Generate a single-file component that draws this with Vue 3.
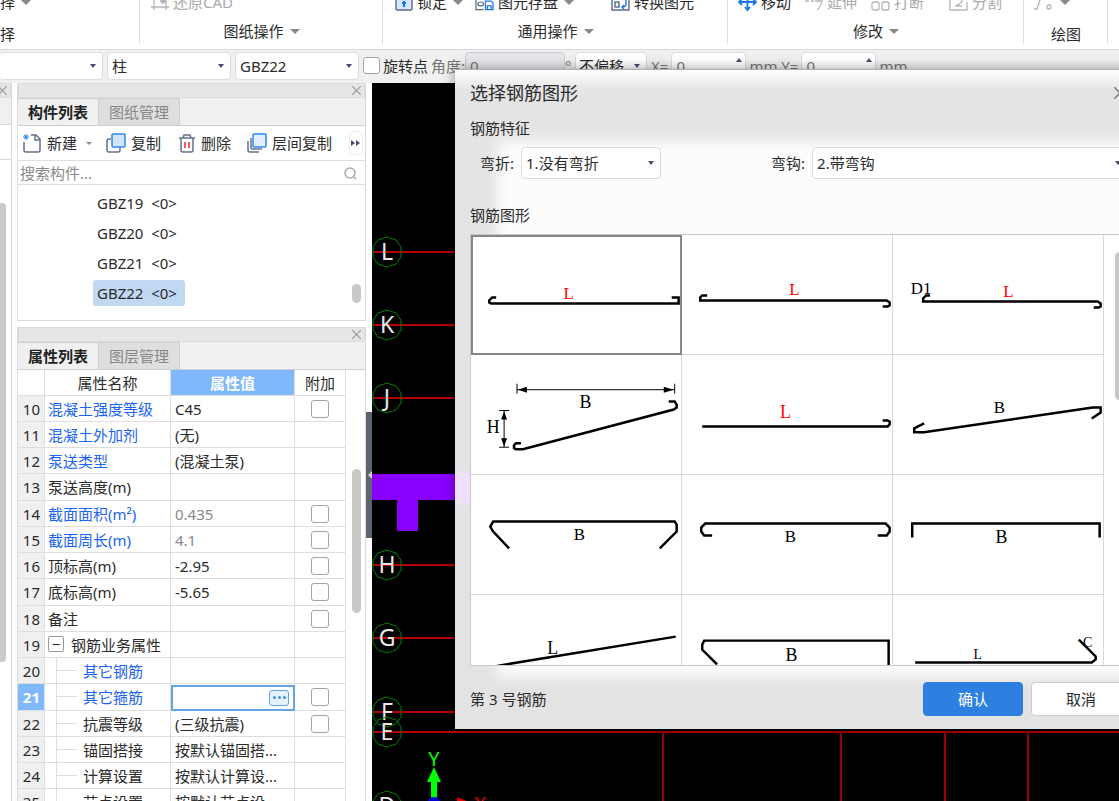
<script setup>
import { ref } from 'vue'

const components = ['GBZ19', 'GBZ20', 'GBZ21', 'GBZ22']
const selectedComponent = ref('GBZ22')

const rows = [
  { n: 10, name: '混凝土强度等级', value: 'C45', link: true, box: true },
  { n: 11, name: '混凝土外加剂', value: '(无)', link: true },
  { n: 12, name: '泵送类型', value: '(混凝土泵)', link: true },
  { n: 13, name: '泵送高度(m)', value: '' },
  { n: 14, name: '截面面积(m²)', value: '0.435', link: true, dim: true, box: true },
  { n: 15, name: '截面周长(m)', value: '4.1', link: true, dim: true, box: true },
  { n: 16, name: '顶标高(m)', value: '-2.95', box: true },
  { n: 17, name: '底标高(m)', value: '-5.65', box: true },
  { n: 18, name: '备注', value: '', box: true },
  { n: 19, name: '钢筋业务属性', value: '', group: true },
  { n: 20, name: '其它钢筋', value: '', link: true, child: true },
  { n: 21, name: '其它箍筋', value: '', link: true, child: true, box: true, active: true },
  { n: 22, name: '抗震等级', value: '(三级抗震)', child: true, box: true },
  { n: 23, name: '锚固搭接', value: '按默认锚固搭...', child: true },
  { n: 24, name: '计算设置', value: '按默认计算设...', child: true },
  { n: 25, name: '节点设置', value: '按默认节点设...', child: true },
]

const shapes = [
  { d: 'M25 63h-4l-3 3v2l2 1h189v-6h-7', texts: [{ t: 'L', x: 98, y: 65, s: 17, red: true }] },
  { d: 'M25 61h-5l-2 2v3h188l3 2v3l-2 1h-5', texts: [{ t: 'L', x: 113, y: 61, s: 17, red: true }] },
  { d: 'M37 61h-4l-3 3v3h176l3 2v3l-2 1h-5', texts: [{ t: 'D1', x: 28, y: 60, s: 17 }, { t: 'L', x: 116, y: 63, s: 17, red: true }] },
  {
    d: 'M50 89h-5l-2 2v3l2 1h7L204 55l3-2v-3l-2-3h-6',
    thin: 'M46 29v10M205 29v10M46 35H205M28 56h10M28 93h10M33 56V93',
    fill: 'M47 35l9-3v6zM204 35l-10-3v6zM33 57l-3 8h6zM33 92l-3-8h6z',
    texts: [{ t: 'B', x: 115, y: 53, s: 18 }, { t: 'H', x: 22, y: 79, s: 18 }],
  },
  { d: 'M20 72H207l2-2v-3l-2-1h-5', texts: [{ t: 'L', x: 104, y: 64, s: 18, red: true }] },
  { d: 'M31 69l-10 5v4h10L201 53h8v5l-9 6', texts: [{ t: 'B', x: 107, y: 58, s: 17 }] },
  { d: 'M38 74L22 57l-3-5 3-5H205l2 3v7l-17 17', texts: [{ t: 'B', x: 109, y: 66, s: 17 }] },
  { d: 'M30 61h-8l-3-4v-4l4-4H205l4 4v4l-3 4h-9', texts: [{ t: 'B', x: 109, y: 68, s: 17 }] },
  { d: 'M19 63V49H208v14', texts: [{ t: 'B', x: 109, y: 69, s: 18 }] },
  { d: 'M20 73L29 71 206 42', texts: [{ t: 'L', x: 82, y: 59, s: 18 }] },
  { d: 'M35 70L20 55v-5l2-4H208V90', texts: [{ t: 'B', x: 110, y: 67, s: 18 }] },
  { d: 'M22 68H200l4-3v-3L187 45', texts: [{ t: 'L', x: 85, y: 65, s: 14 }, { t: 'C', x: 196, y: 52, s: 14 }] },
]
const selectedShape = ref(0)

const axes = [
  { t: 'L', y: 169 }, { t: 'K', y: 242 }, { t: 'J', y: 315 }, { t: 'H', y: 482 },
  { t: 'G', y: 555 }, { t: 'F', y: 629 }, { t: 'E', y: 649 }, { t: 'D', y: 723 },
]
const verticals = [291, 469, 573, 656]
</script>

<template>
  <div class="app">
    <header class="ribbon">
      <section class="group g-select">
        <div class="tools"><button class="tool">择<i class="tri"></i></button></div>
        <div class="caption low">择</div>
      </section>
      <section class="group g-sheet">
        <div class="tools">
          <button class="tool off">
            <svg width="18" height="18" viewBox="0 0 18 18" fill="none" stroke="#b5b5b5" stroke-width="1.3"><path d="M3 1v16M0 14h18M15 1v16M12 5v6M9 8h6M10 6l4 4M14 6l-4 4" /></svg>还原CAD
          </button>
        </div>
        <button class="caption">图纸操作<i class="tri"></i></button>
      </section>
      <section class="group g-common">
        <div class="tools">
          <button class="tool">
            <svg width="18" height="18" viewBox="0 0 18 18" fill="none" stroke="#5b6b85" stroke-width="1.4"><rect x="1" y="3" width="16" height="14" rx="1" fill="#d5e6ff" /><path d="M9 8v6M7 10h4" stroke="#1976ee" stroke-width="2" /></svg>锁定<i class="tri"></i>
          </button>
          <button class="tool">
            <svg width="19" height="18" viewBox="0 0 20 18" fill="none" stroke="#5b6b85" stroke-width="1.3"><path d="M16 5V1H1v16h8" /><ellipse cx="6" cy="11" rx="3" ry="2" /><path d="M11 8h6l2 2v7h-8zM13 17v-4h4v4" stroke="#1976ee" /></svg>图元存盘<i class="tri"></i>
          </button>
          <button class="tool t-convert">
            <svg width="19" height="18" viewBox="0 0 19 18" fill="none" stroke="#5b6b85" stroke-width="1.4"><path d="M1 1v16h17V1M1 4h17" /><rect x="4" y="9" width="4" height="5" /><path d="M15 7v4q0 3-4 3M13 12l-2 2 2 2" stroke="#1976ee" /></svg>转换图元
          </button>
        </div>
        <button class="caption">通用操作<i class="tri"></i></button>
      </section>
      <section class="group g-modify">
        <div class="tools">
          <button class="tool">
            <svg width="19" height="18" viewBox="0 0 19 18" fill="none" stroke="#1976ee" stroke-width="1.8"><path d="M9.500 1v16M1 9h17M7 14l2.500 3 2.500-3M4 6L1 9l3 3M15 6l3 3-3 3" /></svg>移动
          </button>
          <button class="tool off">
            <svg width="18" height="18" viewBox="0 0 18 18" fill="none" stroke="#b5b5b5" stroke-width="1.3"><path d="M0 8h4M6 8h3M10 8h7q-1 6-5 9" /></svg>延伸
          </button>
          <button class="tool off">
            <svg width="19" height="18" viewBox="0 0 19 18" fill="none" stroke="#b5b5b5" stroke-width="1.3"><rect x="1" y="9" width="7" height="8" rx="2" /><rect x="11" y="9" width="7" height="8" rx="2" /></svg>打断
          </button>
          <button class="tool off t-split">
            <svg width="19" height="18" viewBox="0 0 19 18" fill="none" stroke="#b5b5b5" stroke-width="1.3"><path d="M1 1v16h17V9M6 13h7M8 12q5-2 5-5" /></svg>分割
          </button>
        </div>
        <button class="caption">修改<i class="tri"></i></button>
      </section>
      <section class="group g-draw">
        <div class="tools">
          <button class="tool off" aria-label="直线">
            <svg width="24" height="18" viewBox="0 0 24 18" fill="none" stroke="#b5b5b5" stroke-width="1.3"><path d="M2 16h3L9 4" /><circle cx="17" cy="14" r="2" /></svg><i class="tri"></i>
          </button>
        </div>
        <div class="caption low">绘图</div>
      </section>
    </header>

    <div class="options">
      <span class="combo c-first"><select aria-label="楼层"><option></option></select><i class="caret"></i></span>
      <span class="combo c-type"><select aria-label="构件类型"><option>柱</option></select><i class="caret"></i></span>
      <span class="combo c-type"><select aria-label="构件名称"><option>GBZ22</option></select><i class="caret"></i></span>
      <label class="rotate"><input type="checkbox" class="check small" />旋转点</label>
      <label class="dimmed" for="angle">角度:</label>
      <input id="angle" class="num disabled" value="0" disabled />
      <span class="unit">°</span>
      <span class="combo c-offset"><select aria-label="偏移方式"><option>不偏移</option></select><i class="caret"></i></span>
      <label class="dimmed x-label" for="dx">X=</label>
      <span class="spin"><input id="dx" class="num" value="0" /><i class="caret up"></i></span>
      <label class="dimmed" for="dy">mm Y=</label>
      <span class="spin"><input id="dy" class="num" value="0" /><i class="caret up"></i></span>
      <span class="dimmed">mm</span>
    </div>

    <main class="body">
      <aside class="strip">
        <div class="dock-head"><button class="x" aria-label="关闭"><svg width="9" height="9" viewBox="0 0 9 9"><path d="M0 0l9 9M9 0L0 9" /></svg></button></div>
        <div class="strip-tabs"></div>
        <div class="strip-tools"></div>
        <div class="strip-scroll"></div>
      </aside>

      <div class="docks">
        <section class="dock">
          <div class="dock-head"><button class="x" aria-label="关闭"><svg width="9" height="9" viewBox="0 0 9 9"><path d="M0 0l9 9M9 0L0 9" /></svg></button></div>
          <nav class="tabs"><button class="tab on">构件列表</button><button class="tab">图纸管理</button></nav>
          <div class="toolbar">
            <button class="action">
              <svg width="20" height="20" viewBox="0 0 20 20" fill="none" stroke="#66718a" stroke-width="1.500"><path d="M2 9v8q0 2 2 2h12q2 0 2-2V6l-4-4H9M13 2v5h5" /><path d="M4 1v6M1 4h6M2 2l4 4M6 2L2 6" stroke="#2c86f5" stroke-width="1" /></svg>新建<i class="tri tiny"></i>
            </button>
            <button class="action a-copy">
              <svg width="20" height="20" viewBox="0 0 20 20" fill="none" stroke="#66718a" stroke-width="1.500"><path d="M5 6H3q-2 0-2 2v9q0 2 2 2h9q2 0 2-2v-2" /><rect x="6" y="1" width="13" height="13" rx="1" fill="#d3e4fc" stroke="#2c86f5" /></svg>复制
            </button>
            <button class="action a-delete">
              <svg width="18" height="20" viewBox="0 0 18 20" fill="none" stroke="#66718a" stroke-width="1.500"><path d="M1 5h16M5 5l1-3h6l1 3M3 5v12q0 2 2 2h8q2 0 2-2V5" /><path d="M7 9v6M11 9v6" stroke="#ee2233" /></svg>删除
            </button>
            <button class="action a-floor">
              <svg width="20" height="20" viewBox="0 0 20 20" fill="none" stroke="#66718a" stroke-width="1.500"><path d="M4 5v10q0 1 1 1h10M1 8v9q0 2 2 2h9" /><rect x="6" y="1" width="13" height="13" rx="1" fill="#e3efff" stroke="#2c86f5" /></svg>层间复制
            </button>
            <button class="more" aria-label="更多"><svg width="10" height="8" viewBox="0 0 10 8"><path d="M0 1l4 3-4 3zM5 1l4 3-4 3z" fill="#46506a" /></svg></button>
          </div>
          <div class="search">
            <input type="text" placeholder="搜索构件..." aria-label="搜索构件" />
            <svg width="14" height="14" viewBox="0 0 14 14" fill="none" stroke="#aaa" stroke-width="1.500"><circle cx="7" cy="7" r="5" /><path d="M11 11l2 2" /></svg>
          </div>
          <div class="list">
            <button v-for="c in components" :key="c" class="item" :class="{ on: c === selectedComponent }" @click="selectedComponent = c">{{ c }}&nbsp; &lt;0&gt;</button>
            <span class="thumb list-thumb"></span>
          </div>
        </section>

        <section class="dock props">
          <div class="dock-head"><button class="x" aria-label="关闭"><svg width="9" height="9" viewBox="0 0 9 9"><path d="M0 0l9 9M9 0L0 9" /></svg></button></div>
          <nav class="tabs"><button class="tab on">属性列表</button><button class="tab">图层管理</button></nav>
          <div class="table-wrap">
            <table>
              <colgroup><col class="w-no" /><col class="w-name" /><col class="w-value" /><col class="w-add" /></colgroup>
              <thead><tr><th></th><th>属性名称</th><th class="hl">属性值</th><th>附加</th></tr></thead>
              <tbody>
                <tr v-for="r in rows" :key="r.n">
                  <td class="no" :class="{ current: r.active }">{{ r.n }}</td>
                  <td class="name" :class="{ link: r.link, child: r.child }">
                    <button v-if="r.group" class="fold" aria-label="折叠">−</button>{{ r.name }}
                  </td>
                  <td v-if="r.active" class="edit">
                    <div class="editor"><input type="text" :aria-label="r.name" /><button aria-label="编辑"><i></i><i></i><i></i></button></div>
                  </td>
                  <td v-else class="value" :class="{ dim: r.dim }">{{ r.value }}</td>
                  <td class="add"><input v-if="r.box" type="checkbox" class="check" :aria-label="r.name + ' 附加'" /></td>
                </tr>
              </tbody>
            </table>
            <span class="thumb table-thumb"></span>
          </div>
        </section>
      </div>

      <div class="splitter"><button aria-label="收起"><svg width="4" height="8" viewBox="0 0 4 8"><path d="M4 0v8L0 4z" fill="#ccd1d6" /></svg></button></div>

      <div class="canvas">
        <svg class="drawing" fill="none">
          <path d="M0 391H120V417H46V448H25V417H0z" fill="#8a00ff" />
          <path v-for="a in axes" :key="a.t" :d="`M1 ${a.y}H1200`" stroke="#b40000" stroke-width="2" />
          <path v-for="v in verticals" :key="v" :d="`M${v} 649V900`" stroke="#a00000" stroke-width="2" />
          <g v-for="a in axes" :key="a.t" :transform="`translate(15 ${a.y})`">
            <path d="M0-15L9-12 14-5V5L9 12 0 15-9 12-14 5V-5L-9-12z" stroke="#008000" stroke-width="1" />
            <text y="8" class="axis">{{ a.t }}</text>
          </g>
          <path d="M62 684l7 15h-4v19h-6v-19h-4z" fill="#00ff00" />
          <text x="62" y="683" class="y-axis">Y</text>
          <path d="M85 714l12 5-12 5z" fill="#e00000" />
          <text x="108" y="728" class="x-axis">X</text>
          <circle cx="62" cy="721" r="7" fill="#0000d0" />
        </svg>
      </div>
    </main>

    <section class="dialog" role="dialog" aria-labelledby="dlg-title">
      <div class="title-row">
        <h1 id="dlg-title">选择钢筋图形</h1>
        <button class="close" aria-label="关闭"><svg width="12" height="12" viewBox="0 0 12 12" stroke="#777" stroke-width="1.400"><path d="M0 0l12 12M12 0L0 12" /></svg></button>
      </div>
      <h2>钢筋特征</h2>
      <div class="fields">
        <div class="field">
          <label for="bend">弯折:</label>
          <span class="combo big c-bend"><select id="bend"><option>1.没有弯折</option></select><i class="caret"></i></span>
        </div>
        <div class="field grow">
          <label for="hook">弯钩:</label>
          <span class="combo big"><select id="hook"><option>2.带弯钩</option></select><i class="caret"></i></span>
        </div>
      </div>
      <h2>钢筋图形</h2>
      <div class="gallery">
        <div class="cells">
          <button v-for="(s, i) in shapes" :key="i" class="cell" :class="{ on: i === selectedShape }" :aria-label="`钢筋图形 ${i + 1}`" @click="selectedShape = i">
            <svg viewBox="0 0 211 120" fill="none" stroke="#000">
              <path :d="s.d" stroke-width="2.500" />
              <path v-if="s.thin" :d="s.thin" stroke-width="1" />
              <path v-if="s.fill" :d="s.fill" fill="#000" stroke="none" />
              <text v-for="t in s.texts" :key="t.t" :x="t.x" :y="t.y" :font-size="t.s" class="mark" :class="{ red: t.red }">{{ t.t }}</text>
            </svg>
          </button>
        </div>
        <span class="thumb gallery-thumb"></span>
      </div>
      <footer>
        <span>第 3 号钢筋</span>
        <button class="btn primary">确认</button>
        <button class="btn">取消</button>
      </footer>
    </section>
  </div>
</template>

<style>
body {
  margin: 0;
  overflow: hidden;
}
</style>

<style scoped>
* {
  box-sizing: border-box;
}
.app {
  position: relative;
  display: flex;
  flex-direction: column;
  height: 100vh;
  overflow: hidden;
  background: #f0f0f0;
  color: #2b2b2b;
  font: 15px/20px "Noto Sans", "Noto Sans CJK SC", sans-serif;
}
button,
input,
select {
  font: inherit;
  color: inherit;
  margin: 0;
  padding: 0;
  border: 0;
  background: none;
  outline: none;
}
button {
  white-space: nowrap;
}
select {
  appearance: none;
}
.tri {
  display: inline-block;
  flex: none;
  border: 5px solid transparent;
  border-top-color: #888;
  border-bottom: 0;
}
.tri.tiny {
  border-width: 3px;
  border-bottom: 0;
}

/* ribbon */
.ribbon {
  display: flex;
  flex: none;
  align-items: flex-end;
  height: 50px;
  overflow: hidden;
  background: #fff;
  border-bottom: 1px solid #d8d8d8;
}
.group {
  display: flex;
  flex: none;
  flex-direction: column;
  align-items: center;
  gap: 9px;
  height: 57px;
  background: linear-gradient(#dcdcdc, #dcdcdc) right top / 1px 52px no-repeat;
}
.tools {
  display: flex;
  align-self: stretch;
  height: 20px;
}
.tool,
.caption {
  display: flex;
  align-items: center;
}
.tool {
  gap: 4px;
}
.tool .tri {
  margin-left: 2px;
}
.off {
  color: #aaa;
}
.caption {
  gap: 6px;
}
.low {
  padding-top: 3px;
}
.g-select {
  width: 140px;
  align-items: flex-start;
}
.g-sheet {
  width: 243px;
}
.g-sheet .tools {
  padding-left: 11px;
}
.g-common {
  width: 345px;
}
.g-common .tools {
  padding-left: 12px;
  gap: 12px;
}
.t-convert {
  margin-left: 25px;
}
.g-modify {
  width: 296px;
}
.g-modify .tools {
  padding-left: 10px;
  gap: 14px;
}
.t-split {
  margin-left: 11px;
}
.g-draw {
  width: 84px;
}
.g-draw .tools {
  padding-left: 8px;
}
.g-draw .tri {
  margin-left: 0;
}

/* option bar */
.options {
  display: flex;
  flex: none;
  align-items: center;
  height: 33px;
  padding-bottom: 2px;
  white-space: nowrap;
}
.combo {
  position: relative;
  display: block;
  flex: none;
  height: 28px;
}
.combo select {
  width: 100%;
  height: 100%;
  padding: 0 4px;
  background: #fff;
  border: 1px solid #d9dce0;
  border-radius: 4px;
}
.caret {
  position: absolute;
  right: 7px;
  top: 50%;
  margin-top: -2px;
  border: 3px solid transparent;
  border-top: 4px solid #46506a;
  border-bottom: 0;
  pointer-events: none;
}
.caret.up {
  right: 4px;
  top: 8px;
  border: 3px solid transparent;
  border-bottom: 4px solid #46506a;
  border-top: 0;
}
.c-first {
  width: 103px;
}
.c-first select {
  border-left: 0;
}
.c-type {
  width: 124px;
  margin-left: 4px;
}
.c-offset {
  width: 72px;
}
.c-offset select {
  padding: 0 3px;
}
.rotate {
  display: flex;
  align-items: center;
  gap: 3px;
  margin: 0 3px 0 4px;
}
.check {
  display: block;
  appearance: none;
  flex: none;
  width: 18px;
  height: 18px;
  background: #fff;
  border: 1px solid #a4a4a4;
  border-radius: 3px;
}
.check.small {
  width: 17px;
  height: 17px;
}
.dimmed,
.unit {
  color: #777;
}
.num {
  width: 75px;
  height: 28px;
  padding: 0 4px;
  color: #777;
  background: #fff;
  border: 1px solid #d9dce0;
  border-radius: 4px;
}
.num.disabled {
  width: 100px;
  background: #e6e7ea;
  border-color: #c6cbd4;
}
.unit {
  width: 10px;
}
.x-label {
  margin-left: 4px;
}
.spin {
  position: relative;
  margin: 0 3px;
}

/* docks */
.body {
  display: flex;
  flex: 1;
  min-height: 0;
  background: #fff;
}
.strip {
  display: flex;
  flex: none;
  flex-direction: column;
  width: 12px;
  border-right: 1px solid #d8d8d8;
}
.dock-head {
  display: flex;
  flex: none;
  align-items: center;
  justify-content: flex-end;
  height: 15px;
  padding-right: 3px;
  background: #e6e6e6;
  border: 1px solid #dcdcdc;
}
.x {
  display: flex;
}
.x path {
  stroke: #999;
  stroke-width: 1.2;
}
.strip-tabs {
  flex: none;
  height: 27px;
  background: #f0f0f0;
  border-bottom: 1px solid #d8d8d8;
}
.strip-tools {
  flex: none;
  height: 35px;
  border-bottom: 1px solid #d8d8d8;
}
.strip-scroll {
  width: 6px;
  height: 459px;
  margin-top: 43px;
  background: #cbcbcb;
  border-radius: 0 4px 4px 0;
}
.docks {
  display: flex;
  flex: none;
  flex-direction: column;
  gap: 6px;
  width: 349px;
  margin-left: 5px;
}
.dock {
  flex: none;
  border: 1px solid #dadada;
  border-top: 0;
}
.props {
  flex: 1;
  display: flex;
  flex-direction: column;
  min-height: 0;
  border-bottom: 0;
}
.tabs {
  display: flex;
  flex: none;
  height: 28px;
  background: #f0f0f0;
  border-bottom: 1px solid #ccd0d6;
}
.tab {
  width: 81px;
  color: #888;
  background: #dedede;
  border: 1px solid #ccd0d6;
  border-bottom: 0;
  border-left: 0;
}
.tab.on {
  color: #222;
  font-weight: bold;
  background: #f0f0f0;
}
.toolbar {
  display: flex;
  align-items: center;
  height: 35px;
  padding-left: 4px;
  border-bottom: 1px solid #dedede;
}
.action {
  display: flex;
  align-items: center;
  gap: 5px;
}
.action .tri {
  margin-left: 4px;
}
.a-copy {
  margin-left: 14px;
}
.a-delete {
  margin-left: 17px;
}
.a-floor {
  margin-left: 16px;
}
.more {
  display: flex;
  align-items: center;
  justify-content: center;
  width: 14px;
  height: 24px;
  margin: 0 2px 0 auto;
  border: 1px solid #ececec;
  border-radius: 4px;
}
.search {
  display: flex;
  align-items: center;
  height: 24px;
  padding: 0 8px 0 2px;
  border-bottom: 1px solid #dedede;
}
.search input {
  flex: 1;
  min-width: 0;
}
.search input::placeholder {
  color: #8a8a8a;
  opacity: 1;
}
.list {
  position: relative;
  display: flex;
  flex-direction: column;
  align-items: flex-start;
  gap: 4px;
  padding: 5px 0 14px 75px;
}
.item {
  height: 26px;
  padding: 0 8px 0 4px;
  border-radius: 3px;
}
.item.on {
  background: #c0d8f2;
}
.thumb {
  position: absolute;
  width: 9px;
  background: #c8c8c8;
  border-radius: 5px;
}
.list-thumb {
  right: 4px;
  top: 99px;
  height: 19px;
}
.table-wrap {
  position: relative;
  flex: 1;
  min-height: 0;
  overflow: hidden;
}
.table-thumb {
  right: 4px;
  top: 99px;
  height: 144px;
}
table {
  width: 328px;
  table-layout: fixed;
  border-collapse: separate;
  border-spacing: 0;
}
.w-no {
  width: 27px;
}
.w-name {
  width: 126px;
}
.w-value {
  width: 124px;
}
.w-add {
  width: 51px;
}
tr {
  height: 26px;
}
tbody tr:nth-child(4n) {
  height: 27px;
}
th,
td {
  padding: 0;
  font-weight: normal;
  white-space: nowrap;
  border-right: 1px solid #dedede;
  border-bottom: 1px solid #dedede;
}
th.hl {
  color: #fff;
  font-weight: bold;
  background: #80b9fb;
}
.no {
  padding-right: 4px;
  text-align: right;
  background: #f0f0f0;
}
.no.current {
  color: #fff;
  font-weight: bold;
  background: #80b9fb;
}
.name {
  padding-left: 3px;
}
.link {
  color: #1c64f2;
}
.child {
  padding-left: 38px;
  background:
    linear-gradient(#dedede, #dedede) 11px 0 / 1px 100% no-repeat,
    linear-gradient(#dedede, #dedede) 12px 12px / 20px 1px no-repeat;
}
.fold {
  width: 16px;
  height: 16px;
  margin-right: 7px;
  line-height: 12px;
  vertical-align: 1px;
  border: 1px solid #999;
  border-radius: 2px;
}
.value {
  padding-left: 4px;
}
.value.dim {
  color: #8a8a8a;
}
.editor {
  display: flex;
  align-items: center;
  height: 26px;
  padding-right: 4px;
  border: 2px solid #63a4e8;
}
.editor input {
  flex: 1;
  min-width: 0;
  width: 0;
}
.editor button {
  display: flex;
  align-items: center;
  justify-content: center;
  gap: 2px;
  width: 20px;
  height: 16px;
  background: #e6f0fc;
  border: 1px solid #63a4e8;
  border-radius: 3px;
}
.editor i {
  width: 3px;
  height: 3px;
  background: #3f8fe6;
  border-radius: 50%;
}
.edit {
  border: 0;
}
.add .check {
  margin: 0 auto;
}

/* splitter and canvas */
.splitter {
  flex: none;
  width: 6px;
  padding-top: 329px;
}
.splitter button {
  display: flex;
  align-items: center;
  justify-content: flex-end;
  width: 6px;
  height: 126px;
  background: #5b6570;
}
.canvas {
  flex: 1;
  min-width: 0;
  overflow: hidden;
  background: #000;
}
.drawing {
  display: block;
  width: 100%;
  height: 100%;
}
.axis {
  fill: #e8e8e8;
  font-size: 23px;
  text-anchor: middle;
}
.y-axis,
.x-axis {
  font-size: 20px;
  text-anchor: middle;
}
.y-axis {
  fill: #0f0;
}
.x-axis {
  fill: #e00000;
}

/* dialog */
.dialog {
  position: absolute;
  left: 455px;
  right: -27px;
  top: 69px;
  padding: 10px 15px 13px;
  overflow: clip;
  background: linear-gradient(#fff, #e4e4e4 20px, #e4e3e3);
  border-top: 1px solid #b0b0b0;
  box-shadow: 0 0 12px rgba(0, 0, 0, 0.4);
  isolation: isolate;
}
.dialog::before {
  content: "";
  position: absolute;
  z-index: -1;
  inset: 71px -20px 52px 42px;
  background: #fcfcfc;
  filter: blur(7px);
}
.dialog::after {
  content: "";
  position: absolute;
  z-index: -1;
  left: -8px;
  top: 402px;
  width: 40px;
  height: 32px;
  background: #f0e0fd;
  filter: blur(5px);
}
.title-row {
  display: flex;
  align-items: center;
  justify-content: space-between;
  height: 26px;
  padding-right: 5px;
}
.close {
  display: flex;
}
h1,
h2 {
  margin: 0;
  font-weight: normal;
}
h1 {
  font-size: 18px;
}
h2 {
  height: 22px;
  font-size: 15px;
  line-height: 22px;
}
.title-row + h2 {
  margin: 11px 0 8px;
}
.fields {
  display: flex;
  gap: 110px;
  padding: 0 3px 0 10px;
  margin-bottom: 25px;
}
.field {
  display: flex;
  align-items: center;
  gap: 7px;
}
.grow,
.grow .combo {
  flex: 1;
}
.combo.big {
  height: 32px;
}
.c-bend {
  width: 140px;
}
.gallery {
  position: relative;
  height: 432px;
  margin-top: 8px;
  padding-right: 26px;
  overflow: hidden;
  background: #fff;
  border: 1px solid #c8c8c8;
}
.cells {
  display: grid;
  grid-template-columns: repeat(3, 1fr);
}
.cell {
  height: 120px;
  border-right: 1px solid #d8d8d8;
  border-bottom: 1px solid #d8d8d8;
}
.cell.on {
  outline: 2px solid #868686;
  outline-offset: -2px;
}
.cell svg {
  display: block;
  width: 100%;
  height: 100%;
  overflow: visible;
}
.mark {
  fill: #000;
  stroke: none;
  font-family: "Liberation Serif", serif;
  text-anchor: middle;
}
.mark.red {
  fill: #f00;
}
.gallery-thumb {
  right: 6px;
  top: 17px;
  height: 148px;
}
footer {
  display: flex;
  align-items: center;
  gap: 8px;
  margin-top: 16px;
}
footer span {
  flex: 1;
}
.btn {
  width: 100px;
  height: 34px;
  background: #fff;
  border: 1px solid #ccc;
  border-radius: 4px;
}
.btn.primary {
  color: #fff;
  background: #2d7fe0;
  border-color: #2d7fe0;
}
</style>
